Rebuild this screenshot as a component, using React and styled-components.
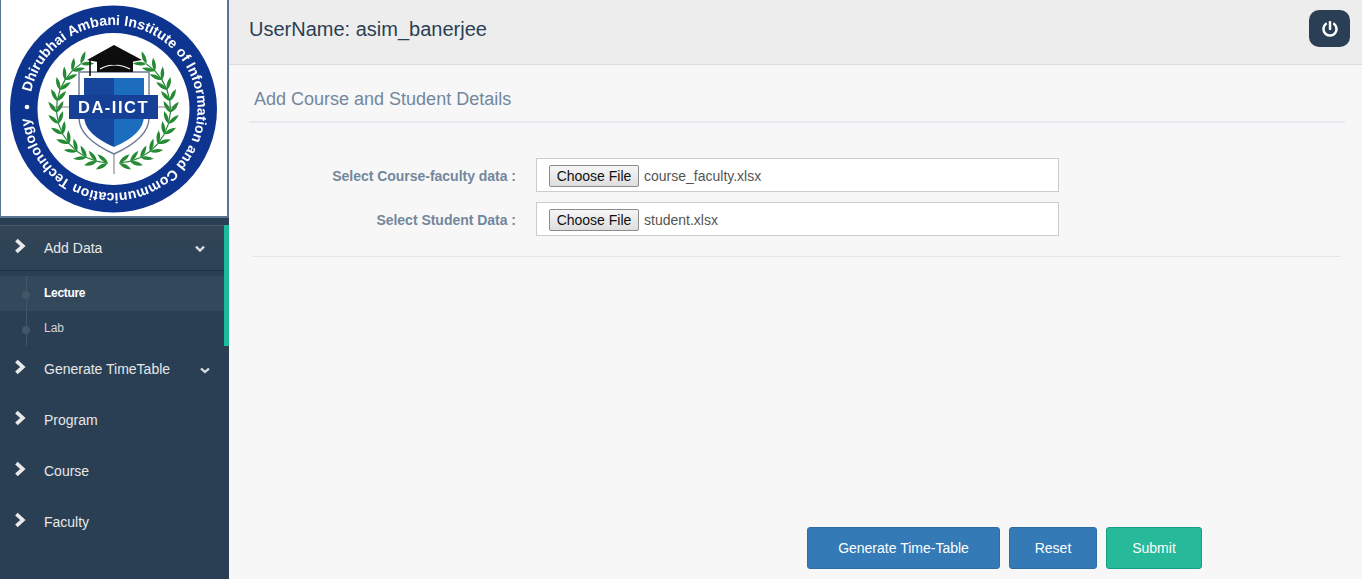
import React, { useEffect, useRef } from "react";
import styled, { createGlobalStyle } from "styled-components";
import { FaPowerOff } from "react-icons/fa";

const Global = createGlobalStyle`
  html, body { margin: 0; padding: 0; height: 579px; overflow: hidden; }
  * { box-sizing: border-box; }
  body { font-family: "Liberation Sans", Arial, sans-serif; font-size: 14px; background: #f7f7f7; }
`;

const Page = styled.div`display: flex; width: 1362px; height: 579px; overflow: hidden;`;
const Sidebar = styled.aside`width: 229px; flex: none; background: #2a3f54; display: flex; flex-direction: column;`;
const LogoBox = styled.div`
  height: 218px; width: 229px; background: #fff;
  border: 1px solid #5a7391; border-top: 0; border-right-width: 2px; border-bottom-width: 2px;
  overflow: hidden;
  svg { display: block; margin-left: -1px; }
`;
const Menu = styled.nav`margin-top: 7px; display: flex; flex-direction: column;`;
const Group = styled.div`border-right: 5px solid #1abb9c;`;
const ActiveHead = styled.div`
  height: 46px; display: flex; align-items: center; padding-left: 14px; color: #e7e7e7;
  border-top: 1px solid #44586b; border-bottom: 1px solid #1f3144;
  background: linear-gradient(#334556, #2c4257);
`;
const MenuItem = styled.div`
  height: 51px; padding: 0 0 5px 14px; display: flex; align-items: center; color: #e7e7e7;
`;
const ChevronSvg = styled.svg`width: 12px; height: 16px; flex: none; margin-top: -4px; color: #e9e9e9;`;
const Chevron = () => (
  <ChevronSvg viewBox="0 0 12 16" aria-hidden="true">
    <path d="M2.4 2.2L8.8 8L2.4 13.8" fill="none" stroke="currentColor" strokeWidth="3.7" />
  </ChevronSvg>
);
const CaretSvg = styled.svg`
  width: ${p => p.$w}px; height: ${p => p.$h}px; color: #d6dbe0; flex: none; margin-right: ${p => p.$mr}px; margin-top: 2px;
`;
const Caret = ({ $mr, $w = 10, $h = 8 }) => (
  <CaretSvg $mr={$mr} $w={$w} $h={$h} viewBox="0 0 10 8" preserveAspectRatio="none" aria-hidden="true">
    <path d="M1 1.6L5 5.6L9 1.6" fill="none" stroke="currentColor" strokeWidth="2.4" />
  </CaretSvg>
);
const ItemLabel = styled.span`margin-left: 18px; flex: 1; line-height: 20px;`;
const SubMenu = styled.ul`
  list-style: none; margin: 5px 0 0; padding: 0; position: relative;
  &::before { content: ""; position: absolute; left: 26px; top: 0; bottom: 0; width: 1px; background: #425668; z-index: 1; }
`;
const SubItem = styled.li`
  height: 35px; display: flex; align-items: center; padding: 0 0 2px 44px; font-size: 12px; position: relative;
  color: ${p => (p.$active ? "#fff" : "#cfd5db")};
  font-weight: ${p => (p.$active ? 700 : 400)};
  background: ${p => (p.$active ? "rgba(255,255,255,0.05)" : "transparent")};
  letter-spacing: ${p => (p.$active ? "-0.3px" : "0")};
  &::before { content: ""; position: absolute; left: 22px; top: 15px; width: 8px; height: 8px; border-radius: 50%; background: #425668; z-index: 2; }
`;
const Main = styled.main`flex: 1; min-width: 0; display: flex; flex-direction: column;`;
const TopBar = styled.header`
  height: 65px; background: #ededed; border-bottom: 1px solid #d9dee4;
  display: flex; align-items: center; justify-content: space-between; padding: 0 12px 7px 20px;
`;
const UserName = styled.div`font-size: 20px; color: #2a3f54; line-height: 22px;`;
const PowerButton = styled.button`
  width: 41px; height: 37px; border: 0; border-radius: 10px; background: #2a3f54; color: #fff;
  display: flex; align-items: center; justify-content: center; padding: 0;
  svg { width: 16px; height: 16px; }
`;
const Content = styled.section`flex: 1; padding: 22px 17px 0 20px; display: flex; flex-direction: column;`;
const Title = styled.h2`
  margin: 0; font-size: 18px; font-weight: 400; color: #73879c; line-height: 24px; padding: 0 0 11px 5px; height: 36px;
  border-bottom: 2px solid #e6e9ed;
`;
const Form = styled.form`display: flex; flex-direction: column; gap: 10px; padding-top: 35px;`;
const Row = styled.div`display: flex; align-items: center; gap: 20px;`;
const Label = styled.label`width: 267px; padding-top: 2px; text-align: right; font-weight: 700; color: #73879c; font-size: 14px; letter-spacing: -0.02px;`;
const FileInput = styled.input`
  width: 523px; height: 34px; padding: 6px 12px 4px; background: #fff; border: 1px solid #ccc; font-size: 14px;
  color: #555; font-family: inherit; line-height: 22px;
  &::file-selector-button {
    height: 22px; width: 90px; margin: 0 5px 0 0; padding: 0; font: 14px "Liberation Sans", Arial, sans-serif; color: #111;
    background: linear-gradient(#f6f6f6, #dedede); border: 1px solid #8c8c8c; border-radius: 2px;
  }
`;
const Divider = styled.hr`margin: 20px 4px 0 4px; border: 0; border-top: 1px solid #e5e5e5;`;
const Actions = styled.div`display: flex; gap: 9px; margin-top: 270px; padding-left: 558px;`;
const Button = styled.button`
  height: 42px; width: ${p => p.$w}px; border-radius: 3px; color: #fff; font: 14px "Liberation Sans", Arial, sans-serif; padding: 0;
  background: ${p => (p.$green ? "#26b99a" : "#337ab7")};
  border: 1px solid ${p => (p.$green ? "#169f85" : "#2e6da4")};
`;

function Laurel() {
  const cx = 113.5, cy = 109, R = 54;
  const leaf = (x, y, a, len, w) => {
    const ca = Math.cos(a), sa = Math.sin(a);
    const ex = x + ca * len, ey = y + sa * len;
    const mx = x + ca * len * 0.45, my = y + sa * len * 0.45;
    return `M${x.toFixed(1)} ${y.toFixed(1)}Q${(mx - sa * w).toFixed(1)} ${(my + ca * w).toFixed(1)} ${ex.toFixed(1)} ${ey.toFixed(1)}Q${(mx + sa * w).toFixed(1)} ${(my - ca * w).toFixed(1)} ${x.toFixed(1)} ${y.toFixed(1)}Z`;
  };
  let d = "";
  let stem = "";
  [1, -1].forEach(side => {
    const pts = [];
    for (let i = 0; i < 13; i++) {
      const deg = 6 + i * 11.5;
      const th = (deg * Math.PI) / 180;
      const r = R + Math.sin(th) * 3;
      const x = cx + side * Math.sin(th) * r, y = cy + Math.cos(th) * r;
      pts.push(`${x.toFixed(1)} ${y.toFixed(1)}`);
      const tangent = Math.atan2(-Math.sin(th), side * Math.cos(th));
      d += leaf(x, y, tangent + 0.6 * side, 13.5, 3.8);
      d += leaf(x, y, tangent - 0.6 * side, 13.5, 3.8);
    }
    stem += "M" + pts.join("L");
  });
  return (
    <g>
      <path d={d} fill="#258a35" />
      <path d={stem} fill="none" stroke="#258a35" strokeWidth="1.2" />
    </g>
  );
}

function Logo() {
  return (
    <svg width="228" height="216" viewBox="0 0 228 216" role="img" aria-label="DA-IICT logo">
      <defs>
        <path id="ringPath" d="M29.5 109A84 84 0 1 1 197.5 109A84 84 0 1 1 29.5 109" />
        <filter id="soft" x="-5%" y="-5%" width="110%" height="110%"><feGaussianBlur stdDeviation="0.4" /></filter>
      </defs>
      <g filter="url(#soft)">
        <circle cx="113.5" cy="109" r="103.5" fill="#10358f" />
        <circle cx="113.5" cy="109" r="76" fill="#fff" />
        <text fontFamily="'Liberation Sans', Arial, sans-serif" fontWeight="700" fontSize="14" fill="#fff">
          <textPath href="#ringPath" startOffset="17" textLength="501" lengthAdjust="spacing">
            Dhirubhai Ambani Institute of Information and Communication Technology
          </textPath>
        </text>
        <circle cx="27" cy="107" r="2.3" fill="#fff" />
        <Laurel />
        <path d="M114 150V174" stroke="#777" strokeWidth="1" />
        <path d="M50 107H70M157 107H177" stroke="#666" strokeWidth="0.8" />
        <path d="M79 72H149V118Q149 138 114 154Q79 138 79 118Z" fill="#fff" stroke="#6d7a94" strokeWidth="1.4" />
        <path d="M84 78H114V147Q84 134 84 116Z" fill="#18479d" />
        <path d="M114 78H144V116Q144 134 114 147Z" fill="#1b6dbd" />
        <path d="M97 59H133V72H97Z" fill="#0c0c0c" />
        <path d="M100 69Q114 61 130 69" fill="none" stroke="#fff" strokeWidth="1.1" />
        <path d="M114 45L142 60L114 65L87 60Z" fill="#0c0c0c" />
        <path d="M90 60V76" stroke="#111" strokeWidth="1.6" />
        <rect x="69" y="95" width="89" height="24" fill="#123f95" />
        <text x="113.5" y="113" textAnchor="middle" fontFamily="'Liberation Sans', Arial, sans-serif" fontWeight="700" fontSize="16.5" letterSpacing="1.5" fill="#fff">DA-IICT</text>
      </g>
    </svg>
  );
}

function FileField({ id, name }) {
  const ref = useRef(null);
  useEffect(() => {
    const dt = new DataTransfer();
    dt.items.add(new File(["x"], name));
    ref.current.files = dt.files;
  }, [name]);
  return <FileInput id={id} type="file" ref={ref} />;
}

export default function App() {
  return (
    <Page>
      <Global />
      <Sidebar>
        <LogoBox><Logo /></LogoBox>
        <Menu>
          <Group>
            <ActiveHead>
              <Chevron />
              <ItemLabel>Add Data</ItemLabel>
              <Caret $mr={19} />
            </ActiveHead>
            <SubMenu>
              <SubItem $active>Lecture</SubItem>
              <SubItem>Lab</SubItem>
            </SubMenu>
          </Group>
          <MenuItem>
            <Chevron />
            <ItemLabel>Generate TimeTable</ItemLabel>
            <Caret $mr={19} $w={10} $h={7} />
          </MenuItem>
          <MenuItem><Chevron /><ItemLabel>Program</ItemLabel></MenuItem>
          <MenuItem><Chevron /><ItemLabel>Course</ItemLabel></MenuItem>
          <MenuItem><Chevron /><ItemLabel>Faculty</ItemLabel></MenuItem>
        </Menu>
      </Sidebar>
      <Main>
        <TopBar>
          <UserName>UserName: asim_banerjee</UserName>
          <PowerButton aria-label="Log out"><FaPowerOff /></PowerButton>
        </TopBar>
        <Content>
          <Title>Add Course and Student Details</Title>
          <Form>
            <Row>
              <Label htmlFor="cf">Select Course-faculty data :</Label>
              <FileField id="cf" name="course_faculty.xlsx" />
            </Row>
            <Row>
              <Label htmlFor="st">Select Student Data :</Label>
              <FileField id="st" name="student.xlsx" />
            </Row>
          </Form>
          <Divider />
          <Actions>
            <Button type="button" $w={193}>Generate Time-Table</Button>
            <Button type="button" $w={88}>Reset</Button>
            <Button type="button" $w={96} $green>Submit</Button>
          </Actions>
        </Content>
      </Main>
    </Page>
  );
}
